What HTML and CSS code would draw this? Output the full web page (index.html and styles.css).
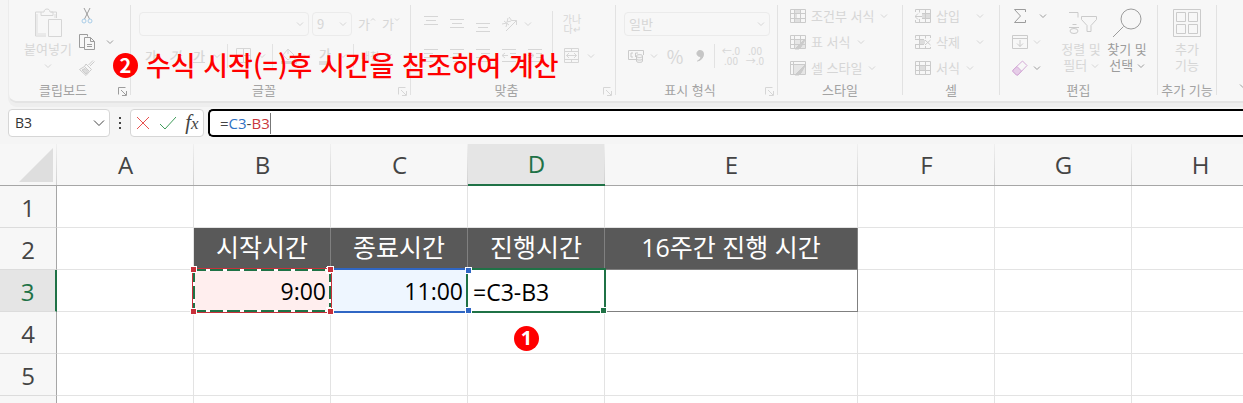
FILE: index.html
```html
<!DOCTYPE html>
<html lang="ko">
<head>
    <meta charset="UTF-8">
    <title>시간 계산</title>
    <link rel="stylesheet" href="styles.css">
</head>
<body>
<svg class="sprite" aria-hidden="true">
    <symbol id="chev" viewBox="0 0 8 6"><path d="M1 1.500l3 3 3-3"/></symbol>
    <symbol id="launch" viewBox="0 0 9 9"><path d="M.5 7.500v-7h7M3 3l5 5M8.500 4v4.500H4"/></symbol>
    <symbol id="grid" viewBox="0 0 16 14"><path d="M.5.5h15v13H.5zM.5 4.500h15M.5 9.500h15M4.500.5v13M10.500.5v13"/></symbol>
</svg>

<!-- 리본 메뉴 -->
<div class="ribbon">
    <section class="group clipboard">
        <div class="body">
            <button class="big">
                <svg class="pic" viewBox="0 0 32 32"><path d="M9 5H3.500v24H14M19 5h5.500v6M9 8.500V5h3c0-4 6-4 6 0h3v3.500z"/><path d="M5 7v20h9M23 7v4" stroke-width="2" opacity=".4"/><path d="M16.500 12.500h13v17h-13z"/></svg>
                <span>붙여넣기</span>
                <svg class="chev"><use href="#chev"/></svg>
            </button>
            <div class="stack">
                <button class="item" aria-label="잘라내기"><svg class="ico dark" viewBox="0 0 16 16"><path d="M5 0l5.500 11M11 0L5.500 11"/><g stroke="#a9cde8"><circle cx="5" cy="13" r="2"/><circle cx="11" cy="13" r="2"/></g></svg></button>
                <button class="item" aria-label="복사"><svg class="ico dark" viewBox="0 0 16 16"><path d="M5 13.500H.5V.5h8v2M5.500 3.500h6l4 4v8h-10zM11.500 3.500v4h4M8 10.500h5M8 12.500h5"/></svg><svg class="chev dark"><use href="#chev"/></svg></button>
                <button class="item" aria-label="서식 복사"><svg class="ico mid" viewBox="0 0 16 16"><path d="M15.500 1.500L11 6M14 .5L9.500 5M7 4l5.500 5.500M7 4L5.500 6.500l5 5L12.500 9.500M5.500 6.500L.5 9.500 7 15.500l3.500-4"/><path d="M3 10l3-1.500 3 3L7 14z" fill="#ddd"/></svg></button>
            </div>
        </div>
        <h2>클립보드</h2><button class="launch dark" aria-label="클립보드 옵션"><svg><use href="#launch"/></svg></button>
    </section>

    <section class="group font">
        <div class="body rows">
            <div class="row">
                <div class="pick wide"><select aria-label="글꼴 이름"><option></option></select><svg class="chev"><use href="#chev"/></svg></div>
                <div class="pick size"><select aria-label="글꼴 크기"><option>9</option></select><svg class="chev"><use href="#chev"/></svg></div>
                <button class="cell" aria-label="글꼴 크기 크게">가<svg class="tick" viewBox="0 0 6 16"><path d="M1 4.500l2-2 2 2"/></svg></button>
                <button class="cell" aria-label="글꼴 크기 작게">가<svg class="tick" viewBox="0 0 6 16"><path d="M1 2.500l2 2 2-2"/></svg></button>
            </div>
            <div class="row">
                <button class="cell"><b>가</b></button>
                <button class="cell"><i>가</i></button>
                <button class="cell"><u>가</u></button>
                <svg class="chev"><use href="#chev"/></svg>
                <span class="sep"></span>
                <button class="cell" aria-label="테두리"><svg class="ico" viewBox="0 0 16 16"><path d="M.5.5h14v14H.5zM7.500.5v14M.5 7.500h14"/></svg></button>
                <svg class="chev"><use href="#chev"/></svg>
                <span class="sep"></span>
                <button class="cell" aria-label="채우기 색"><svg class="ico" viewBox="0 0 16 16"><path d="M7 1l6 6-6 5-5-5zM7 1v5M14 8v3"/><path d="M0 14.500h16" stroke-width="3"/></svg></button>
                <svg class="chev"><use href="#chev"/></svg>
                <button class="cell tint"><b>가</b></button>
                <svg class="chev"><use href="#chev"/></svg>
                <span class="sep"></span>
                <button class="cell small">내천</button>
                <svg class="chev dark"><use href="#chev"/></svg>
            </div>
        </div>
        <h2>글꼴</h2><button class="launch" aria-label="글꼴 옵션"><svg><use href="#launch"/></svg></button>
    </section>

    <section class="group align">
        <div class="body">
            <div class="rows">
                <div class="row">
                    <button class="cell" aria-label="위쪽 맞춤"><svg class="ico" viewBox="0 0 16 16"><path d="M1 .5h14M3 4.500h10M1 8.500h14"/></svg></button>
                    <button class="cell" aria-label="가운데 맞춤"><svg class="ico" viewBox="0 0 16 16"><path d="M1 3.500h14M3 7.500h10M1 11.500h14"/></svg></button>
                    <button class="cell" aria-label="아래쪽 맞춤"><svg class="ico" viewBox="0 0 16 16"><path d="M1 7.500h14M3 11.500h10M1 15.500h14"/></svg></button>
                    <button class="cell" aria-label="방향"><svg class="ico" viewBox="0 0 16 16"><path d="M5 15L15.500 4.500M11 4.500h4.500V9M1 8l5-1-1 4M3 5l5 4M7 2l-1 4 4-1M8 1l3 4"/></svg></button>
                    <svg class="chev"><use href="#chev"/></svg>
                </div>
                <div class="row">
                    <button class="cell" aria-label="왼쪽 맞춤"><svg class="ico" viewBox="0 0 16 16"><path d="M1 1.500h14M1 5.500h9M1 9.500h14M1 13.500h9"/></svg></button>
                    <button class="cell" aria-label="가운데"><svg class="ico" viewBox="0 0 16 16"><path d="M1 1.500h14M4 5.500h8M1 9.500h14M4 13.500h8"/></svg></button>
                    <button class="cell" aria-label="오른쪽 맞춤"><svg class="ico" viewBox="0 0 16 16"><path d="M1 1.500h14M6 5.500h9M1 9.500h14M6 13.500h9"/></svg></button>
                    <button class="cell" aria-label="내어쓰기"><svg class="ico" viewBox="0 0 16 16"><path d="M1 1.500h14M9 5.500h6M9 9.500h6M1 13.500h14M1 7.500h6M4 5L1 7.500 4 10"/></svg></button>
                    <button class="cell" aria-label="들여쓰기"><svg class="ico" viewBox="0 0 16 16"><path d="M1 1.500h14M9 5.500h6M9 9.500h6M1 13.500h14M1 7.500h6M4 5l3 2.500L4 10"/></svg></button>
                </div>
            </div>
            <span class="sep tall"></span>
            <div class="rows">
                <div class="row"><button class="cell small">가나<br>다↵</button></div>
                <div class="row">
                    <button class="cell" aria-label="병합"><svg class="ico" viewBox="0 0 16 16"><path d="M.5.5h14v14H.5zM.5 3.500h14M.5 11.500h14M7.500.5v3M7.500 11.500v3M2.500 7.500h10M5 5L2.500 7.500 5 10M10 5l2.500 2.500L10 10"/></svg></button>
                    <svg class="chev"><use href="#chev"/></svg>
                </div>
            </div>
        </div>
        <h2>맞춤</h2><button class="launch" aria-label="맞춤 옵션"><svg><use href="#launch"/></svg></button>
    </section>

    <section class="group number">
        <div class="body rows">
            <div class="row">
                <div class="pick format"><select aria-label="표시 형식"><option>일반</option></select><svg class="chev"><use href="#chev"/></svg></div>
            </div>
            <div class="row">
                <button class="cell" aria-label="회계 형식"><svg class="ico mid" viewBox="0 0 16 16"><path d="M8 11.500H.5v-9h15V7M5 5H3v4h2M7.500 9V5H10"/><path d="M8.500 8c0-2 6-2 6 0v5c0 2-6 2-6 0zM8.500 8c0 2 6 2 6 0M8.500 10.500c0 2 6 2 6 0" fill="#eee"/></svg></button>
                <svg class="chev"><use href="#chev"/></svg>
                <button class="cell percent">%</button>
                <button class="cell mark" aria-label="쉼표"><svg class="ico" viewBox="0 0 16 16"><path d="M8 2.500a3 3 0 1 0 1 5.800C9 11 7 12 5.500 13 9 12.500 11.500 9.500 11.500 6A3.400 3.400 0 0 0 8 2.500z" fill="#c6c6c6" stroke="#c6c6c6"/></svg></button>
                <span class="sep"></span>
                <button class="cell small">←.0<br>.00</button>
                <button class="cell small">.00<br>→.0</button>
            </div>
        </div>
        <h2>표시 형식</h2><button class="launch" aria-label="표시 형식 옵션"><svg><use href="#launch"/></svg></button>
    </section>

    <section class="group style">
        <div class="body">
            <div class="stack">
                <button class="item"><svg class="ico mid" viewBox="0 0 16 14"><path d="M4 1h6v4H7v4h3v4H4z" fill="#e0e0e0" stroke="none"/><use href="#grid"/></svg>조건부 서식<svg class="chev"><use href="#chev"/></svg></button>
                <button class="item"><svg class="ico mid" viewBox="0 0 16 14"><path d="M5 5h10v8H5z" fill="#e6e6e6" stroke="none"/><use href="#grid"/><path d="M16 3l-7 7-4 4h4l2-2z" fill="#ccc"/></svg>표 서식<svg class="chev"><use href="#chev"/></svg></button>
                <button class="item"><svg class="ico mid" viewBox="0 0 16 14"><path d="M.5.5h15v13H.5zM.5 3.500h15M3.500.5v13"/><path d="M4 4h11v9H4z" fill="#e6e6e6" stroke="none"/><path d="M16 3l-7 7-4 4h4l2-2z" fill="#ccc"/></svg>셀 스타일<svg class="chev"><use href="#chev"/></svg></button>
            </div>
        </div>
        <h2>스타일</h2>
    </section>

    <section class="group cells">
        <div class="body">
            <div class="stack">
                <button class="item"><svg class="ico mid" viewBox="0 0 16 14"><path d="M7 5h8v4H7z" fill="#ddd" stroke="none"/><path d="M.5 3V.5h15v13H.5V11M4.500.5v3M10.500.5v13M7 4.500h9M7 9.500h9M4.500 10v3.500M0 7.500h7M3 4.500l-3 3 3 3"/></svg>삽입<svg class="chev far"><use href="#chev"/></svg></button>
                <button class="item"><svg class="ico mid" viewBox="0 0 16 14"><path d="M4 5h6v4H4z" fill="#ddd" stroke="none"/><path d="M15.500 3V.5H.5v3M.5 10v3.500h15V12M4.500.5v13M10.500.5v3M10.500 11v2.500M0 4.500h9M0 9.500h9M10 5l5.500 5M15.500 5L10 10"/></svg>삭제<svg class="chev far"><use href="#chev"/></svg></button>
                <button class="item"><svg class="ico mid" viewBox="0 0 16 14"><path d="M5 5h6v5H5z" fill="#ddd" stroke="none"/><use href="#grid"/></svg>서식<svg class="chev"><use href="#chev"/></svg></button>
            </div>
        </div>
        <h2>셀</h2>
    </section>

    <section class="group editing">
        <div class="body">
            <div class="stack">
                <button class="item" aria-label="합계"><svg class="ico dark" viewBox="0 0 16 16"><path d="M13.500 4V1.500H2.500L8.500 8l-6 6.500h11V12"/></svg><svg class="chev dark sum"><use href="#chev"/></svg></button>
                <button class="item" aria-label="채우기"><svg class="ico mid" viewBox="0 0 16 14"><path d="M.5.5h15v13H.5zM.5 3.500h15M8 5v6.500M5 8.500l3 3 3-3"/></svg><svg class="chev"><use href="#chev"/></svg></button>
                <button class="item" aria-label="지우기"><svg class="ico" viewBox="0 0 16 16"><g stroke="#d3a9d6"><path d="M1 10l9.500-9 4.500 4.500-9 9.500H4.500L1 11.500z"/><path d="M1 10l4-3.500 4.500 4.500L6 15H4.500L1 11.500z" fill="#e6cde8"/></g></svg><svg class="chev dark"><use href="#chev"/></svg></button>
            </div>
            <button class="big sort">
                <svg class="pic mid" viewBox="0 0 32 32"><path d="M4 5.500h9v5M4 20.500h10M7.500 17.500h4"/><ellipse cx="9" cy="24" rx="4" ry="2.500"/><path d="M16.500 9.500h15v3L26 18.500v6h-4v-6l-5.500-6z"/></svg>
                <span>정렬 및<br>필터 <svg class="chev"><use href="#chev"/></svg></span>
            </button>
            <button class="big on">
                <svg class="pic dark" viewBox="0 0 32 32"><circle cx="20" cy="12" r="10"/><path d="M12.500 19.500L2 30"/></svg>
                <span>찾기 및<br>선택 <svg class="chev dark"><use href="#chev"/></svg></span>
            </button>
        </div>
        <h2>편집</h2>
    </section>

    <section class="group addins">
        <div class="body">
            <button class="big">
                <svg class="pic mid" viewBox="0 0 32 32"><path d="M2.500 2.500h27v27h-27zM5.500 5.500h9v9h-9zM17.500 5.500h9v9h-9zM5.500 17.500h9v9h-9zM17.500 17.500h9v9h-9z"/></svg>
                <span>추가<br>기능</span>
            </button>
        </div>
        <h2>추가 기능</h2>
    </section>

    <button class="collapse" aria-label="리본 메뉴 축소"><svg class="chev dark"><use href="#chev"/></svg></button>

    <p class="note"><span class="badge">2</span>수식 시작(=)후 시간을 참조하여 계산</p>
</div>

<!-- 수식 입력줄 -->
<div class="formula-bar">
    <div class="name-box">
        <input type="text" value="B3" aria-label="이름 상자">
        <button aria-label="이름 목록"><svg viewBox="0 0 12 8"><path d="M1 1.500l5 5 5-5"/></svg></button>
    </div>
    <span class="dots"><i></i><i></i><i></i></span>
    <div class="actions">
        <button aria-label="취소"><svg viewBox="0 0 16 16"><path d="M2 2l12 12M14 2L2 14" stroke="#e8514f"/></svg></button>
        <button aria-label="입력"><svg viewBox="0 0 16 16"><path d="M0 9l5 5L16 2" stroke="#3f9c5a"/></svg></button>
        <button class="fx" aria-label="함수 삽입">f<small>x</small></button>
    </div>
    <div class="formula" role="textbox" contenteditable="true" aria-label="수식 입력줄">=<span class="blue">C3</span>-<span class="red">B3</span><span class="caret"></span></div>
</div>

<!-- 시트 -->
<div class="sheet">
    <table>
        <colgroup>
            <col class="num"><col><col><col><col><col class="wide-col"><col><col><col>
        </colgroup>
        <thead>
            <tr>
                <th class="corner"><svg viewBox="0 0 34 34"><path d="M34 0v34H0z"/></svg></th>
                <th>A</th><th>B</th><th>C</th><th class="current">D</th><th>E</th><th>F</th><th>G</th><th>H</th>
            </tr>
        </thead>
        <tbody>
            <tr><th>1</th><td></td><td></td><td></td><td></td><td></td><td></td><td></td><td></td></tr>
            <tr>
                <th>2</th><td></td>
                <td class="head">시작시간</td><td class="head">종료시간</td><td class="head">진행시간</td><td class="head">16주간 진행 시간</td>
                <td></td><td></td><td></td>
            </tr>
            <tr>
                <th class="current">3</th><td></td>
                <td class="time start">9:00<span class="range march"></span><span class="range red-range"><i></i><i></i><i></i><i></i></span></td>
                <td class="time end">11:00<span class="range blue-range"><i></i><i></i><i></i><i></i></span></td>
                <td class="edit">=C3-B3<span class="range active-range"><i></i></span></td>
                <td class="boxed"></td>
                <td></td><td></td><td></td>
            </tr>
            <tr><th>4</th><td></td><td></td><td></td><td class="mark-cell"><span class="badge">1</span></td><td></td><td></td><td></td><td></td></tr>
            <tr><th>5</th><td></td><td></td><td></td><td></td><td></td><td></td><td></td><td></td></tr>
            <tr class="rest"><th></th><td></td><td></td><td></td><td></td><td></td><td></td><td></td><td></td></tr>
        </tbody>
    </table>
</div>
</body>
</html>
```

FILE: styles.css
```css
* {
    box-sizing: border-box;
}

body {
    margin: 0;
    background: #f5f5f5;
    font-family: "Noto Sans CJK KR", "Noto Sans", sans-serif;
    font-size: 13px;
    color: #444;
}

button {
    margin: 0;
    padding: 0;
    border: 0;
    background: none;
    font: inherit;
    color: inherit;
}

svg {
    fill: none;
    stroke: currentColor;
    display: block;
    flex: none;
}

.sprite {
    position: absolute;
    width: 0;
    height: 0;
}

/* ribbon */
.ribbon {
    position: relative;
    display: flex;
    margin-left: 8px;
    height: 103px;
    padding-top: 5px;
    background: #f7f7f7;
    border-left: 1px solid #ececec;
    border-bottom: 2px solid #e4e4e4;
    border-radius: 0 0 0 9px;
    box-shadow: 0 4px 0 #eee;
    color: #d6d6d6;
}

.group {
    position: relative;
    flex: none;
    height: 90px;
    border-right: 1px solid #e2e2e2;
}

.clipboard { width: 122px; }
.font { width: 280px; }
.align { width: 205px; }
.number { width: 162px; }
.style { width: 125px; }
.cells { width: 97px; }
.editing { width: 158px; }
.addins { width: 59px; }

.group h2 {
    margin: 0;
    font-size: 13px;
    font-weight: 400;
    line-height: 12px;
    text-align: center;
    white-space: nowrap;
    color: #a3a3a3;
}

/* groups with a launcher in the corner */
.clipboard h2, .font h2, .align h2, .number h2 { padding-right: 13px; }

.body {
    display: flex;
    height: 79px;
}

.rows {
    display: flex;
    flex-direction: column;
    gap: 8px;
    padding-top: 7px;
}

.row {
    display: flex;
    align-items: center;
    height: 24px;
}

.font .body, .number .body { padding-left: 8px; }
.align .body { padding-left: 7px; }
.style .body, .cells .body, .editing .body { padding-left: 12px; }

.dark { color: #9c9c9c; }
.mid { color: #cbcbcb; }

.chev {
    width: 8px;
    height: 6px;
    margin: 0 2px;
}

.ico {
    width: 16px;
    height: 16px;
}

.cell {
    width: 24px;
    height: 24px;
    display: flex;
    align-items: center;
    justify-content: center;
    line-height: 16px;
}

.tick {
    width: 6px;
    height: 16px;
}

.cell b, .cell i, .cell u { font-weight: 500; }
.align .cell { width: 26px; }

.small {
    font-size: 10px;
    line-height: 10px;
    white-space: nowrap;
}

.tint b { border-bottom: 4px solid #ddd; line-height: 14px; }
.percent { width: 30px; font-size: 18px; }
.mark { width: 20px; }

.sep {
    width: 1px;
    height: 24px;
    margin: 0 4px;
    background: #e2e2e2;
}

.sep.tall {
    height: 62px;
    margin: 6px 6px 0 4px;
}

.pick {
    position: relative;
    display: flex;
    align-items: center;
    height: 24px;
    margin-right: 3px;
}

.pick select {
    width: 100%;
    height: 24px;
    padding: 0 4px;
    border: 1px solid #ebebeb;
    border-radius: 4px;
    background: none;
    appearance: none;
    font: inherit;
    line-height: 20px;
    color: inherit;
}

.pick .chev {
    position: absolute;
    right: 3px;
}

.wide { width: 170px; }
.size { width: 40px; }
.format { width: 146px; }

.launch {
    position: absolute;
    right: 3px;
    bottom: -1px;
}

.launch svg {
    width: 9px;
    height: 9px;
}

.stack {
    display: flex;
    flex-direction: column;
    gap: 3px;
}

.item {
    display: flex;
    align-items: center;
    height: 23px;
    line-height: 20px;
    padding-bottom: 1px;
    white-space: nowrap;
}

.item .ico { margin-right: 5px; }
.item .chev { margin-left: 6px; }
.item .far { margin-left: 16px; }
.editing .item .chev { margin-left: 0; }
.editing .item .sum { margin-left: 6px; }

.big {
    display: flex;
    flex-direction: column;
    align-items: center;
    padding-top: 2px;
    line-height: 16px;
    white-space: nowrap;
    height: 78px;
}

.big .pic {
    width: 32px;
    height: 32px;
    margin-bottom: 2px;
}

.big > .chev { margin-top: 6px; }

.big span .chev {
    display: inline-block;
    vertical-align: middle;
    margin: 0;
}

.clipboard .big { width: 70px; padding-left: 8px; }
.sort { margin-left: 9px; }
.editing .big { width: 46px; }
.addins .big { width: 100%; }
.on { color: #9c9c9c; }

.collapse {
    margin: 78px 0 0 20px;
    align-self: flex-start;
}

/* annotations */
.note {
    position: absolute;
    left: 104px;
    top: 47px;
    display: flex;
    align-items: center;
    gap: 8px;
    margin: 0;
    font-size: 27px;
    font-weight: 500;
    line-height: 36px;
    white-space: nowrap;
    color: #f00;
}

.badge {
    width: 25px;
    height: 25px;
    border-radius: 50%;
    background: #f00;
    color: #fff;
    font-size: 20px;
    font-weight: 700;
    line-height: 24px;
    text-align: center;
}

/* formula bar */
.formula-bar {
    display: flex;
    height: 41px;
    padding: 6px 0 7px 8px;
}

.name-box, .actions {
    display: flex;
    align-items: center;
    background: #fff;
    border: 1px solid #d6d6d6;
    border-radius: 4px;
}

.name-box { width: 102px; }

.name-box input {
    flex: 1;
    min-width: 0;
    padding: 0 0 0 6px;
    border: 0;
    background: none;
    font: 14px "Open Sans", sans-serif;
    line-height: 20px;
    color: #333;
}

.name-box svg {
    width: 12px;
    height: 8px;
    margin-right: 4px;
}

.dots {
    display: flex;
    flex-direction: column;
    justify-content: center;
    gap: 3px;
    margin: 0 9px;
}

.dots i {
    width: 2px;
    height: 2px;
    background: #444;
}

.actions {
    width: 74px;
    justify-content: space-around;
}

.actions svg {
    width: 16px;
    height: 16px;
}

.fx {
    font: italic 21px "Liberation Serif", serif;
    line-height: 22px;
}

.fx small { font-size: 17px; }

.formula {
    flex: 1;
    display: flex;
    align-items: center;
    margin-left: 4px;
    padding-left: 10px;
    border: 2px solid #000;
    border-right: 0;
    border-radius: 5px 0 0 5px;
    background: #fff;
    font-family: "Open Sans", sans-serif;
    font-size: 15px;
    line-height: 20px;
}

.blue { color: #2f72c4; }
.red { color: #c9373c; }

.caret {
    width: 1px;
    height: 21px;
    background: #777;
}

/* sheet */
.sheet {
    overflow: hidden;
    height: calc(100vh - 144px);
}

table {
    width: 1269px;
    table-layout: fixed;
    border-collapse: separate;
    border-spacing: 0;
    background: #fff;
    font-family: "Open Sans", "Noto Sans CJK KR", sans-serif;
}

col { width: 137px; }
.num { width: 57px; }
.wide-col { width: 253px; }

th, td {
    position: relative;
    height: 42px;
    padding: 0;
    border-right: 1px solid #e3e3e3;
    border-bottom: 1px solid #e3e3e3;
    font-size: 24px;
    font-weight: 400;
    line-height: 32px;
    white-space: nowrap;
}

thead th {
    border-right: 0;
    border-bottom-color: #a6a6a6;
    background: linear-gradient(#f0f0f0, #d0d0d0) right / 1px 100% no-repeat #f7f7f7;
}

tbody th {
    padding-top: 2px;
    border-right-color: #a6a6a6;
    border-bottom-color: #dcdcdc;
    background: #f7f7f7;
}

th.current {
    background-color: #e5e5e5;
    color: #1f7246;
}

thead .current {
    border-bottom: 2px solid #1f7246;
}

tbody .current {
    border-right: 2px solid #1f7246;
}

.rest th, .rest td { height: 7px; border-bottom: 0; }

.corner svg {
    width: 34px;
    height: 34px;
    margin-left: 19px;
    fill: #dedede;
    stroke: none;
}

.head {
    padding-bottom: 4px;
    background: #595959;
    border-color: #808080;
    font-size: 25px;
    color: #fff;
    text-align: center;
}

.boxed { border-color: #808080; }

.time {
    padding-right: 4px;
    text-align: right;
    font-size: 23px;
    color: #000;
}

.start { background: #ffeeee; }
.end { background: #eef6ff; }

.edit {
    padding-top: 3px;
    padding-left: 5px;
    font-size: 23px;
    color: #000;
}

.range {
    position: absolute;
    inset: -2px;
    z-index: 1;
}

.march {
    inset: -1px;
    background:
        repeating-linear-gradient(90deg, #1f7246 0 13px, #fff 13px 17px) top / 100% 2px no-repeat,
        repeating-linear-gradient(90deg, #1f7246 0 13px, #fff 13px 17px) bottom / 100% 2px no-repeat,
        repeating-linear-gradient(#1f7246 0 13px, #fff 13px 17px) left / 2px 100% no-repeat,
        repeating-linear-gradient(#1f7246 0 13px, #fff 13px 17px) right / 2px 100% no-repeat;
}

.red-range {
    z-index: 3;
    border: 1px solid #c9303a;
    color: #c9303a;
}

.blue-range {
    z-index: 2;
    border: 2px solid #2f66c4;
    border-left: 0;
    border-right: 0;
    color: #2f66c4;
}

.active-range {
    z-index: 1;
    border: 2px solid #1f7246;
    color: #1f7246;
}

/* drag handles in the corners */
.range i {
    position: absolute;
    width: 7px;
    height: 7px;
    border: 1px solid #fff;
    background: currentColor;
    top: -3px;
    left: -3px;
}

.range i:nth-child(even) { left: auto; right: -3px; }
.range i:nth-child(n+3) { top: auto; bottom: -3px; }
.active-range i:first-child { top: auto; left: auto; right: -3px; bottom: -3px; }

.mark-cell .badge {
    position: absolute;
    left: 46px;
    top: 14px;
}
```
